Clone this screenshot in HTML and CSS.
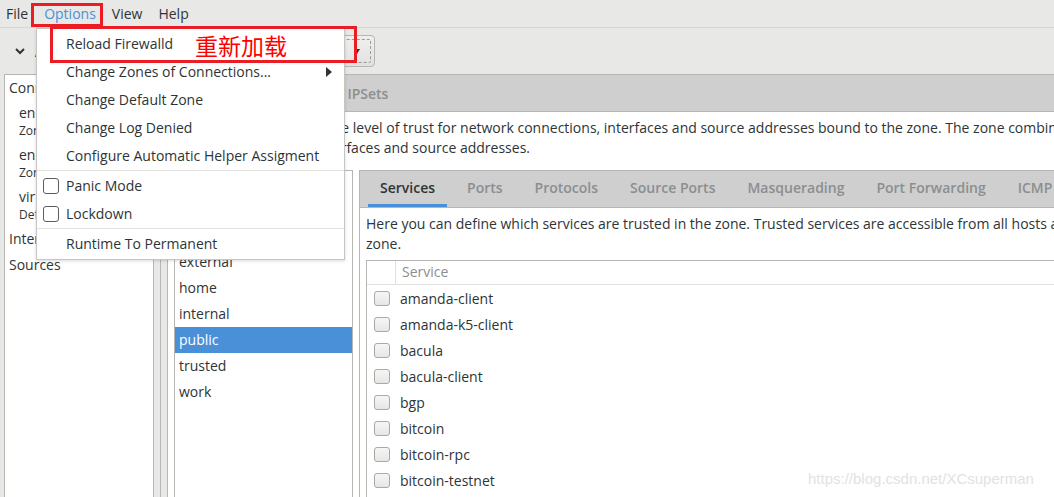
FILE: index.html
```html
<!DOCTYPE html>
<html>
<head>
<meta charset="utf-8">
<title>Firewall Configuration</title>
<link rel="stylesheet" href="styles.css">
</head>
<body>
<div class="window">
  <div class="menubar">
    <span class="mb-item first">File</span>
    <span class="mb-item active">Options</span>
    <span class="mb-item">View</span>
    <span class="mb-item">Help</span>
  </div>
  <div class="toolbar">
    <div class="tb-left">
      <svg class="chev" width="10" height="7" viewBox="0 0 10 7"><polyline points="1,1 5,5 9,1" fill="none" stroke="#2e3436" stroke-width="2"/></svg>
      <span class="tb-label">Active Bindings</span>
    </div>
    <div class="combo"><span class="combo-text">Runtime</span><span class="combo-arrow"></span></div>
  </div>
  <div class="main">
    <div class="sidepanel">
      <div class="sp-head">Connections</div>
      <div class="sp-item"><div class="sp-name">ens33</div><div class="sp-sub">Zone: public</div></div>
      <div class="sp-item"><div class="sp-name">ens37</div><div class="sp-sub">Zone: public</div></div>
      <div class="sp-item"><div class="sp-name">virbr0</div><div class="sp-sub">Default Zone: public</div></div>
      <div class="sp-head">Interfaces</div>
      <div class="sp-head">Sources</div>
    </div>
    <div class="rightcol">
      <div class="toptabs">
        <span class="ttab active">Zones</span>
        <span class="ttab">Services</span>
        <span class="ttab">IPSets</span>
      </div>
      <div class="zone-desc">
        <div class="dline">A firewalld zone defines the level of trust for network connections, interfaces and source addresses bound to the zone. The zone combines services, ports, protocols, masquerading, port/packet forwarding, icmp filters and rich rules. The zone can be bound to</div>
        <div class="dline">Zone can be bound to interfaces and source addresses.</div>
      </div>
      <div class="zonerow">
        <div class="strip"></div>
        <div class="strip"></div>
        <div class="pad-w"></div>
        <div class="zonelist">
          <div class="zl-item">block</div>
          <div class="zl-item">dmz</div>
          <div class="zl-item">drop</div>
          <div class="zl-item">external</div>
          <div class="zl-item">home</div>
          <div class="zl-item">internal</div>
          <div class="zl-item selected">public</div>
          <div class="zl-item">trusted</div>
          <div class="zl-item">work</div>
        </div>
        <div class="pad-w2"></div>
        <div class="notebook">
          <div class="nb-tabs">
            <span class="nb-tab active">Services</span>
            <span class="nb-tab">Ports</span>
            <span class="nb-tab">Protocols</span>
            <span class="nb-tab">Source Ports</span>
            <span class="nb-tab">Masquerading</span>
            <span class="nb-tab">Port Forwarding</span>
            <span class="nb-tab">ICMP Filter</span>
            <span class="nb-tab">Rich Rules</span>
          </div>
          <div class="nb-page">
            <div class="pline">Here you can define which services are trusted in the zone. Trusted services are accessible from all hosts and networks that can reach the machine from connections, interfaces and sources bound to this</div>
            <div class="pline">zone.</div>
            <div class="svc-table">
              <div class="svc-head"><span class="col-chk"></span><span class="col-name">Service</span></div>
              <div class="svc-row"><span class="chk"></span><span class="svc-name">amanda-client</span></div>
              <div class="svc-row"><span class="chk"></span><span class="svc-name">amanda-k5-client</span></div>
              <div class="svc-row"><span class="chk"></span><span class="svc-name">bacula</span></div>
              <div class="svc-row"><span class="chk"></span><span class="svc-name">bacula-client</span></div>
              <div class="svc-row"><span class="chk"></span><span class="svc-name">bgp</span></div>
              <div class="svc-row"><span class="chk"></span><span class="svc-name">bitcoin</span></div>
              <div class="svc-row"><span class="chk"></span><span class="svc-name">bitcoin-rpc</span></div>
              <div class="svc-row"><span class="chk"></span><span class="svc-name">bitcoin-testnet</span></div>
              <div class="svc-row"><span class="chk"></span><span class="svc-name">bitcoin-testnet-rpc</span></div>
            </div>
          </div>
        </div>
      </div>
    </div>
  </div>
</div>

<div class="menu">
  <div class="mi">Reload Firewalld</div>
  <div class="mi sub">Change Zones of Connections...<span class="sub-arrow"></span></div>
  <div class="mi">Change Default Zone</div>
  <div class="mi">Change Log Denied</div>
  <div class="mi">Configure Automatic Helper Assigment</div>
  <div class="msep"></div>
  <div class="mi check"><span class="mchk"></span>Panic Mode</div>
  <div class="mi check"><span class="mchk"></span>Lockdown</div>
  <div class="msep"></div>
  <div class="mi">Runtime To Permanent</div>
</div>

<div class="redbox rb-options"></div>
<div class="redbox rb-reload"></div>
<div class="note">重新加载</div>
<div class="watermark">https://blog.csdn.net/XCsuperman</div>
</body>
</html>
```

FILE: styles.css
```css
* { box-sizing: border-box; }
html, body { margin: 0; padding: 0; }
body {
  width: 1054px;
  height: 497px;
  overflow: hidden;
  position: relative;
  font-family: "Open Sans", "Noto Sans", sans-serif;
  font-size: 14px;
  color: #2e3436;
  background: #e8e8e7;
}
.window {
  width: 1054px;
  height: 497px;
  display: flex;
  flex-direction: column;
  overflow: hidden;
}

/* menubar */
.menubar {
  height: 28px;
  flex: none;
  display: flex;
  align-items: center;
  border-bottom: 1px solid #d5d5d3;
}
.mb-item { padding: 0 8px; line-height: 26px; }
.mb-item.first { padding-left: 6px; }
.mb-item.active { color: #4a90d9; }

/* toolbar */
.toolbar {
  height: 46px;
  flex: none;
  display: flex;
  align-items: center;
}
.tb-left {
  width: 195px;
  display: flex;
  align-items: center;
  padding-left: 15px;
}
.chev { display: block; margin-right: 10px; }
.combo {
  width: 180px;
  height: 32px;
  position: relative;
  border: 1px solid #b6b6b3;
  border-radius: 4px;
  background: linear-gradient(#efefee, #e2e2e0);
  display: flex;
  align-items: center;
  padding-left: 10px;
}
.combo::before {
  content: "";
  position: absolute;
  inset: 3px;
  border: 1px dashed #9a9a98;
  border-radius: 2px;
}
.combo-arrow {
  position: absolute;
  right: 14px;
  top: 13px;
  width: 0; height: 0;
  border-left: 3.5px solid transparent;
  border-right: 3.5px solid transparent;
  border-top: 5px solid #2e3436;
}

/* main */
.main { flex: 1; display: flex; min-height: 0; }
.sidepanel {
  flex: none;
  width: 150px;
  margin-left: 4px;
  background: #fff;
  border: 1px solid #b6b6b3;
  border-bottom: none;
}
.sp-head { height: 26px; line-height: 26px; padding-left: 4px; }
.sp-head:first-child { height: 25px; line-height: 25px; }
.sp-item { height: 42px; padding: 4px 0 2px 14px; white-space: nowrap; }
.sp-name { line-height: 18px; }
.sp-sub { line-height: 18px; font-size: 12px; }

.rightcol {
  flex: 1;
  min-width: 0;
  display: flex;
  flex-direction: column;
  background: #fff;
}
.toptabs {
  height: 38px;
  flex: none;
  background: #cfcfcf;
  border-top: 1px solid #b6b6b3;
  border-bottom: 1px solid #b6b6b3;
  display: flex;
  align-items: center;
  padding-left: 38px;
  gap: 30px;
  font-weight: 600;
  color: #8b8e8f;
}
.ttab.active { color: #2e3436; }
.zone-desc {
  height: 58px;
  flex: none;
  padding: 6px 0 0 15px;
  line-height: 20px;
  white-space: nowrap;
  overflow: hidden;
}
.zonerow { flex: 1; display: flex; min-height: 0; }
.strip {
  flex: none;
  width: 7px;
  background: #e8e8e7;
  border-right: 1px solid #b6b6b3;
}
.pad-w { flex: none; width: 6px; }
.zonelist {
  flex: none;
  width: 179px;
  border: 1px solid #b6b6b3;
  border-bottom: none;
}
.zl-item { height: 26px; line-height: 26px; padding-left: 4px; }
.zl-item.selected { background: #4a90d9; color: #fff; }
.pad-w2 { flex: none; width: 6px; }

.notebook {
  flex: 1;
  min-width: 0;
  border-left: 1px solid #b6b6b3;
  border-top: 1px solid #b6b6b3;
  display: flex;
  flex-direction: column;
}
.nb-tabs {
  height: 37px;
  flex: none;
  background: #cfcfcf;
  border-bottom: 1px solid #b6b6b3;
  display: flex;
  padding-left: 8px;
  gap: 8px;
  white-space: nowrap;
  font-weight: 600;
  color: #8b8e8f;
}
.nb-tab { padding: 0 12px; line-height: 34px; border-bottom: 3px solid transparent; }
.nb-tab.active { color: #2e3436; border-bottom-color: #4a90d9; }
.nb-page { flex: 1; padding: 6px 0 0 6px; overflow: hidden; }
.pline { line-height: 20px; white-space: nowrap; }
.svc-table {
  margin-top: 6px;
  border: 1px solid #b6b6b3;
  border-right: none;
  border-bottom: none;
}
.svc-head {
  height: 24px;
  display: flex;
  border-bottom: 1px solid #e1e1df;
}
.col-chk { width: 29px; border-right: 1px solid #e1e1df; }
.col-name { padding-left: 6px; line-height: 22px; color: #8b8e8f; }
.svc-row { height: 26px; display: flex; align-items: center; }
.chk {
  width: 16px; height: 15px;
  margin-left: 7px;
  margin-right: 10px;
  border: 1px solid #a9aaa7;
  border-radius: 3px;
  background: linear-gradient(#f6f6f5, #e6e6e4);
}

/* popup menu */
.menu {
  position: absolute;
  left: 36px;
  top: 28px;
  width: 309px;
  background: #fff;
  border: 1px solid #c6c6c4;
  padding: 1px 0;
  box-shadow: 0 1px 3px rgba(0,0,0,0.15);
}
.mi {
  height: 28px;
  line-height: 28px;
  padding-left: 29px;
  position: relative;
  white-space: nowrap;
}
.sub-arrow {
  position: absolute;
  right: 12px;
  top: 9px;
  width: 0; height: 0;
  border-top: 5px solid transparent;
  border-bottom: 5px solid transparent;
  border-left: 6px solid #2e3436;
}
.mchk {
  position: absolute;
  left: 6px;
  top: 6px;
  width: 16px;
  height: 16px;
  border: 1px solid #5c5e5b;
  border-radius: 3px;
  background: #fff;
}
.msep { height: 1px; background: #e0e0df; margin-bottom: 1px; }

/* annotations */
.redbox {
  position: absolute;
  border: 3px solid #ec1c24;
}
.rb-options { left: 31px; top: 3px; width: 72px; height: 24px; }
.rb-reload { left: 50px; top: 26px; width: 307px; height: 37px; }
.note {
  position: absolute;
  left: 195px;
  top: 29px;
  font-family: "Noto Sans CJK SC", sans-serif;
  font-size: 23px;
  line-height: 32px;
  color: #ff0000;
}
.watermark {
  position: absolute;
  left: 808px;
  top: 470px;
  font-family: "Liberation Sans", Arial, sans-serif;
  font-size: 15px;
  line-height: 18px;
  color: #e2e2e2;
}
```
